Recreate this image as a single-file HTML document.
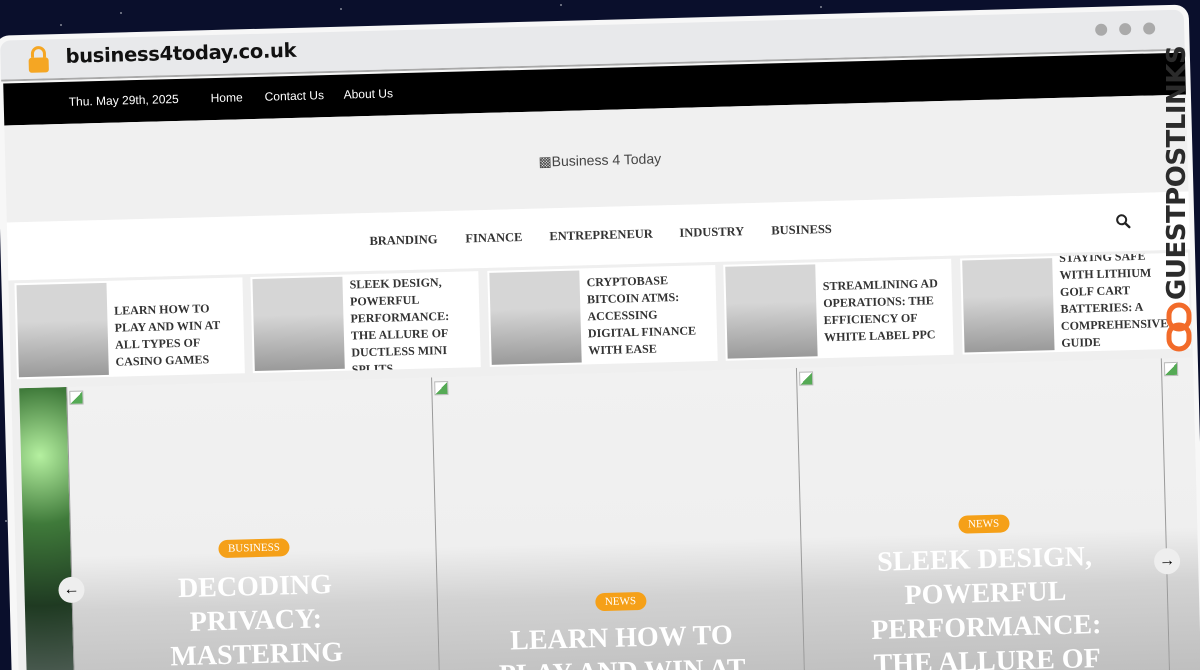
<!DOCTYPE html>
<html><head><meta charset="utf-8"><style>
*{margin:0;padding:0;box-sizing:border-box}
html,body{width:1200px;height:670px;overflow:hidden}
body{background:#0a0f2c;position:relative;font-family:"Liberation Sans",sans-serif}
#clip{position:absolute;left:0;top:0;width:1200px;height:670px;overflow:hidden}
.star{position:absolute;width:2px;height:2px;background:#fff;opacity:.5;border-radius:50%}
#rot{position:absolute;left:0;top:0;width:1200px;height:670px;transform:rotate(-1.5deg);transform-origin:600px 335px}
.frame{position:absolute;left:3px;top:20px;width:1194px;height:690px;background:#f7f7f7;border-radius:14px}
.chrome{position:absolute;left:8px;top:25px;width:1184px;height:41px;background:#e8e9eb;border-bottom:2px solid #a9a9a9;border-radius:10px 10px 0 0}
.url{position:absolute;left:73px;top:31px;font-size:19.5px;font-weight:bold;color:#111;font-family:"DejaVu Sans","Liberation Sans",sans-serif;letter-spacing:-0.3px}
.dot{position:absolute;top:37px;width:12px;height:12px;border-radius:50%;background:#aaa}
.black{position:absolute;left:10px;top:68px;width:1182px;height:42px;background:#000;color:#fff;font-size:12px}
.black span{position:absolute;top:13px}
.head{position:absolute;left:10px;top:110px;width:1182px;height:97px;background:#f0f0f0}
.nav{position:absolute;left:10px;top:207px;width:1182px;height:58px;background:#fff}
.nav span{position:absolute;top:21px;font-family:"Liberation Serif",serif;font-weight:bold;font-size:12.5px;color:#333}
.band{position:absolute;left:10px;top:265px;width:1182px;height:110px;background:#efefef}
.card{position:absolute;top:268px;width:228px;height:96px;background:#fff}
.card .im{position:absolute;left:2px;top:2px;width:90px;height:92px;background:linear-gradient(#d6d6d6 40%,#9a9a9a)}
.card .tw{position:absolute;left:0;top:0;width:240px;height:96px;overflow:hidden}
.card .t{position:absolute;left:99px;width:116px;font-family:"Liberation Serif",serif;font-weight:bold;font-size:12px;line-height:17px;color:#333}
.slides{position:absolute;left:10px;top:373px;width:1182px;height:340px;background:#efefef;overflow:hidden}
.sl{position:absolute;top:0;width:366px;height:340px;border-left:1px solid #9a9a9a;background:linear-gradient(#f1f1f1 0,#efefef 50%,#d2d2d2 66%,#b9b9b9 100%)}
.badge{position:absolute;left:50%;transform:translateX(-50%);background:#f5a018;color:#fff;font-family:"Liberation Serif",serif;font-size:11px;padding:3px 10px;border-radius:10px}
.tt{position:absolute;left:0;width:100%;text-align:center;color:#fff;font-family:"Liberation Serif",serif;font-weight:bold;font-size:28px;line-height:34px}
.arr{position:absolute;width:26px;height:26px;border-radius:50%;background:#eee;text-align:center;line-height:26px;font-size:16px;font-weight:bold;color:#000}
.brk{position:absolute;width:14px;height:14px;border:1px solid #bbb;background:linear-gradient(135deg,#fff 50%,#5a5 50%)}
</style></head><body><div id="clip">
<div class="star" style="left:120px;top:12px"></div><div class="star" style="left:340px;top:8px"></div><div class="star" style="left:560px;top:4px"></div><div class="star" style="left:820px;top:6px"></div><div class="star" style="left:60px;top:24px"></div><div class="star" style="left:3px;top:250px"></div><div class="star" style="left:5px;top:520px"></div>
<div id="rot">
<div class="frame"></div>
<div class="chrome"></div>
<svg style="position:absolute;left:34px;top:31px" width="24" height="28" viewBox="0 0 24 28"><path d="M6 12V8a6 6 0 0 1 12 0v4" fill="none" stroke="#f5a623" stroke-width="3"/><rect x="2" y="12" width="20" height="15" rx="3" fill="#f5a623"/></svg>
<div class="url">business4today.co.uk</div>
<div class="dot" style="left:1103px"></div><div class="dot" style="left:1127px"></div><div class="dot" style="left:1151px"></div>
<div class="black"><span style="left:65px">Thu. May 29th, 2025</span><span style="left:207px">Home</span><span style="left:261px">Contact Us</span><span style="left:340px">About Us</span></div>
<div class="head"><span style="position:absolute;left:533px;top:42px;font-size:14px;color:#444">&#9641;Business 4 Today</span></div>
<div class="nav">
<span style="left:362px">BRANDING</span><span style="left:458px">FINANCE</span><span style="left:542px">ENTREPRENEUR</span><span style="left:672px">INDUSTRY</span><span style="left:764px">BUSINESS</span>
<svg style="position:absolute;left:1108px;top:20px" width="16" height="16" viewBox="0 0 16 16"><circle cx="6.5" cy="6.5" r="4.5" fill="none" stroke="#222" stroke-width="2"/><path d="M10 10l4 4" stroke="#222" stroke-width="2.4" stroke-linecap="round"/></svg>
</div>
<div class="band"></div>
<div class="card" style="left:16px"><div class="im"></div><div class="tw"><div class="t" style="top:22px">LEARN HOW TO PLAY AND WIN AT ALL TYPES OF CASINO GAMES</div></div></div>
<div class="card" style="left:252px"><div class="im"></div><div class="tw"><div class="t" style="top:2px">SLEEK DESIGN, POWERFUL PERFORMANCE: THE ALLURE OF DUCTLESS MINI SPLITS</div></div></div>
<div class="card" style="left:489px"><div class="im"></div><div class="tw"><div class="t" style="top:6px">CRYPTOBASE BITCOIN ATMS: ACCESSING DIGITAL FINANCE WITH EASE</div></div></div>
<div class="card" style="left:725px"><div class="im"></div><div class="tw"><div class="t" style="top:16px">STREAMLINING AD OPERATIONS: THE EFFICIENCY OF WHITE LABEL PPC</div></div></div>
<div class="card" style="left:962px"><div class="im"></div><div class="tw"><div class="t" style="top:-6px;width:100px">STAYING SAFE WITH LITHIUM GOLF CART BATTERIES: A COMPREHENSIVE GUIDE</div></div></div>
<div class="slides">
<div style="position:absolute;left:8px;top:0;width:47px;height:340px;background:radial-gradient(circle at 40% 20%,#b5f0a0 0,#3f7a3a 25%,#1f3a22 55%,#4a5a50 80%)"></div>
<div class="sl" style="left:55px"><div class="brk" style="left:2px;top:4px"></div><div class="badge" style="top:157px">BUSINESS</div><div class="tt" style="top:188px">DECODING<br>PRIVACY:<br>MASTERING<br>THE ART</div></div>
<div class="sl" style="left:420px"><div class="brk" style="left:2px;top:4px"></div><div class="badge" style="top:220px">NEWS</div><div class="tt" style="top:249px">LEARN HOW TO<br>PLAY AND WIN AT</div></div>
<div class="sl" style="left:785px"><div class="brk" style="left:2px;top:4px"></div><div class="badge" style="top:152px">NEWS</div><div class="tt" style="top:180px">SLEEK DESIGN,<br>POWERFUL<br>PERFORMANCE:<br>THE ALLURE OF</div></div>
<div class="sl" style="left:1150px"><div class="brk" style="left:2px;top:4px"></div></div>
<div class="arr" style="left:42px;top:190px">&#8592;</div>
<div class="arr" style="left:1138px;top:190px">&#8594;</div>
</div>
</div>
<div style="position:absolute;left:1162px;top:300px;width:30px;transform:rotate(-90deg);transform-origin:0 0;white-space:nowrap;font-family:'DejaVu Sans',sans-serif;font-weight:bold;font-size:26px;color:#2b2b2b;letter-spacing:-0.5px;line-height:30px">GUESTPOSTLINKS</div>
<svg style="position:absolute;left:1166px;top:302px" width="26" height="50" viewBox="0 0 26 50"><rect x="3" y="3" width="20" height="24" rx="10" fill="none" stroke="#f26b2a" stroke-width="5"/><rect x="3" y="23" width="20" height="24" rx="10" fill="none" stroke="#f26b2a" stroke-width="5"/></svg>
</div></body></html>
